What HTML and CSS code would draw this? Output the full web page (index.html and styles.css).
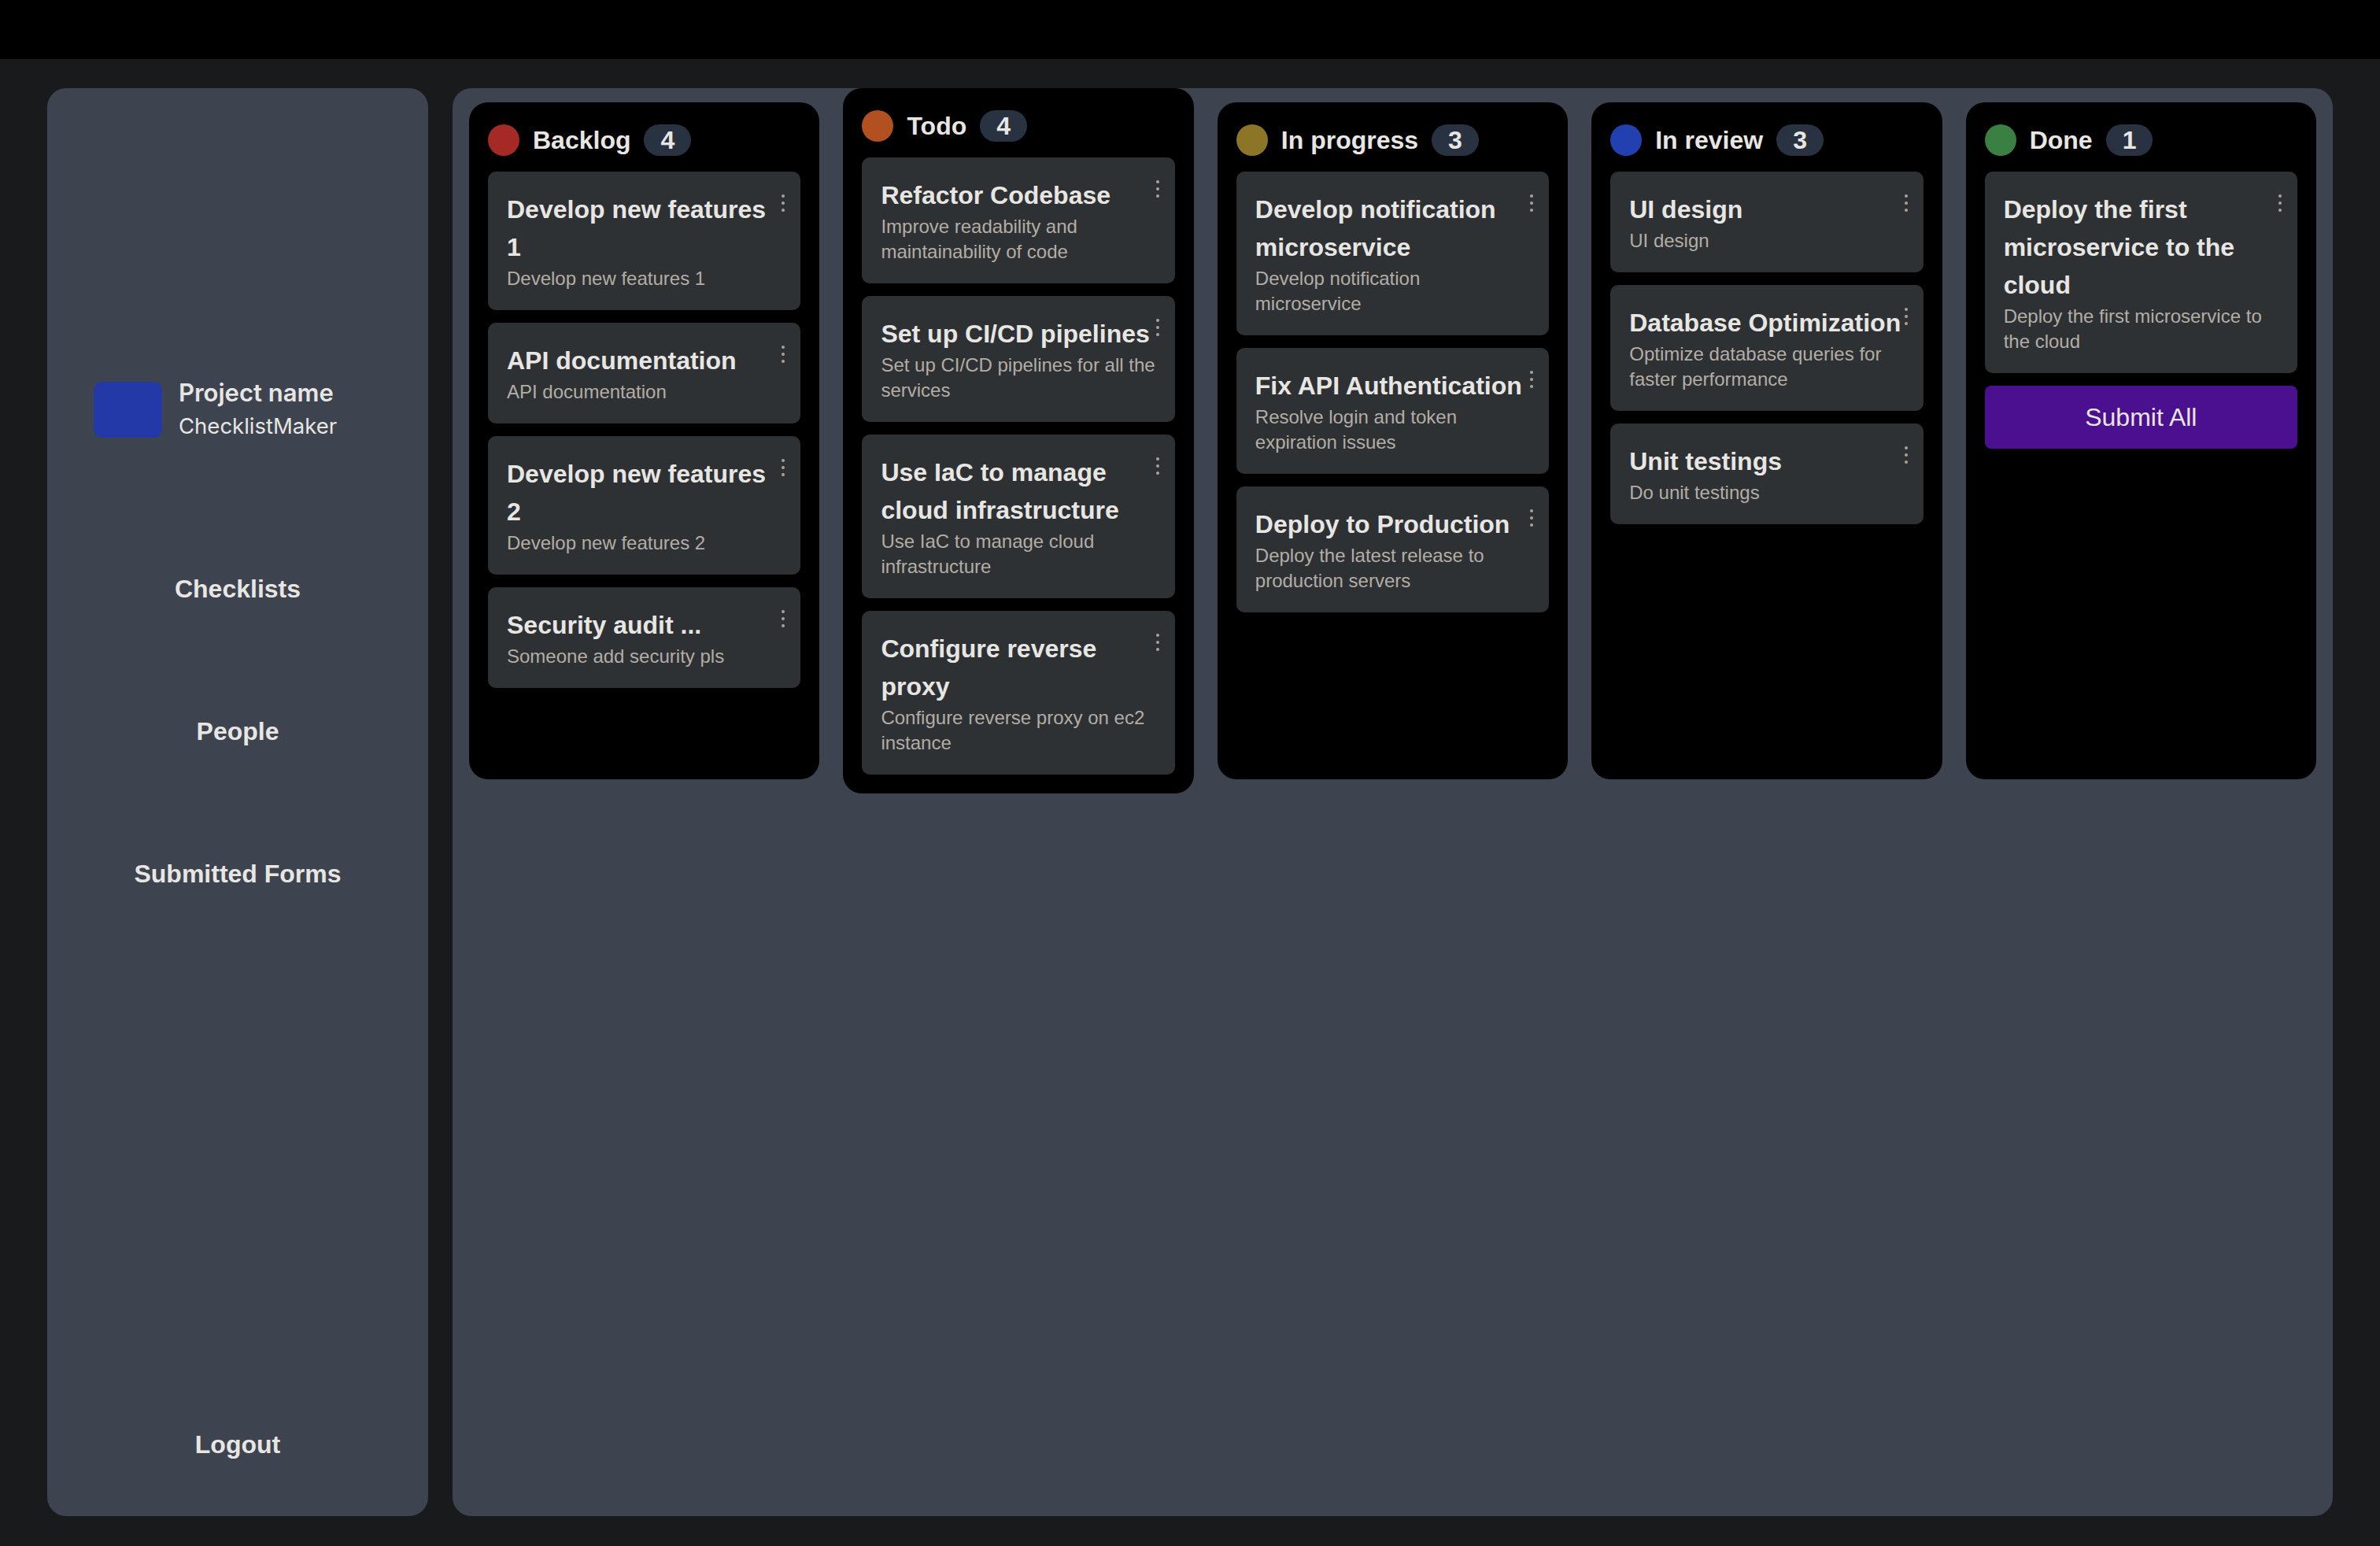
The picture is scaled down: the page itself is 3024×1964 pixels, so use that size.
FILE: index.html
```html
<!DOCTYPE html>
<html lang="en">
  <head>
    <meta charset="UTF-8" />
    <meta name="viewport" content="width=device-width, initial-scale=1.0" />
    <title>ChecklistMaker</title>
    <link rel="stylesheet" href="styles.css">
  </head>
  <body>
    <div class="topbar"></div>

    <div class="layout">
      <aside class="sidebar">
        <div class="project">
          <div class="project-logo"></div>
          <div class="project-text">
            <div class="project-label">Project name</div>
            <div class="project-name">ChecklistMaker</div>
          </div>
        </div>
        <nav class="nav">
          <a class="nav-link" href="#">Checklists</a>
          <a class="nav-link" href="#">People</a>
          <a class="nav-link" href="#">Submitted Forms</a>
        </nav>
        <a class="nav-link logout" href="#">Logout</a>
      </aside>

      <main class="panel">
        <div class="board">
          <section class="column">
            <div class="column-header">
              <span class="dot dot-red"></span>
              <h2>Backlog</h2>
              <span class="count">4</span>
            </div>
            <div class="card">
              <h3>Develop new features 1</h3>
              <p>Develop new features 1</p>
              <svg class="kebab" width="4" height="22" viewBox="0 0 4 22"><circle cx="2" cy="2" r="2"/><circle cx="2" cy="11" r="2"/><circle cx="2" cy="20" r="2"/></svg>
            </div>
            <div class="card">
              <h3>API documentation</h3>
              <p>API documentation</p>
              <svg class="kebab" width="4" height="22" viewBox="0 0 4 22"><circle cx="2" cy="2" r="2"/><circle cx="2" cy="11" r="2"/><circle cx="2" cy="20" r="2"/></svg>
            </div>
            <div class="card">
              <h3>Develop new features 2</h3>
              <p>Develop new features 2</p>
              <svg class="kebab" width="4" height="22" viewBox="0 0 4 22"><circle cx="2" cy="2" r="2"/><circle cx="2" cy="11" r="2"/><circle cx="2" cy="20" r="2"/></svg>
            </div>
            <div class="card">
              <h3>Security audit ...</h3>
              <p>Someone add security pls</p>
              <svg class="kebab" width="4" height="22" viewBox="0 0 4 22"><circle cx="2" cy="2" r="2"/><circle cx="2" cy="11" r="2"/><circle cx="2" cy="20" r="2"/></svg>
            </div>
          </section>

          <section class="column">
            <div class="column-header">
              <span class="dot dot-orange"></span>
              <h2>Todo</h2>
              <span class="count">4</span>
            </div>
            <div class="card">
              <h3>Refactor Codebase</h3>
              <p>Improve readability and maintainability of code</p>
              <svg class="kebab" width="4" height="22" viewBox="0 0 4 22"><circle cx="2" cy="2" r="2"/><circle cx="2" cy="11" r="2"/><circle cx="2" cy="20" r="2"/></svg>
            </div>
            <div class="card">
              <h3>Set up CI/CD pipelines</h3>
              <p>Set up CI/CD pipelines for all the services</p>
              <svg class="kebab" width="4" height="22" viewBox="0 0 4 22"><circle cx="2" cy="2" r="2"/><circle cx="2" cy="11" r="2"/><circle cx="2" cy="20" r="2"/></svg>
            </div>
            <div class="card">
              <h3>Use IaC to manage cloud infrastructure</h3>
              <p>Use IaC to manage cloud infrastructure</p>
              <svg class="kebab" width="4" height="22" viewBox="0 0 4 22"><circle cx="2" cy="2" r="2"/><circle cx="2" cy="11" r="2"/><circle cx="2" cy="20" r="2"/></svg>
            </div>
            <div class="card">
              <h3>Configure reverse proxy</h3>
              <p>Configure reverse proxy on ec2 instance</p>
              <svg class="kebab" width="4" height="22" viewBox="0 0 4 22"><circle cx="2" cy="2" r="2"/><circle cx="2" cy="11" r="2"/><circle cx="2" cy="20" r="2"/></svg>
            </div>
          </section>

          <section class="column">
            <div class="column-header">
              <span class="dot dot-gold"></span>
              <h2>In progress</h2>
              <span class="count">3</span>
            </div>
            <div class="card">
              <h3>Develop notification microservice</h3>
              <p>Develop notification microservice</p>
              <svg class="kebab" width="4" height="22" viewBox="0 0 4 22"><circle cx="2" cy="2" r="2"/><circle cx="2" cy="11" r="2"/><circle cx="2" cy="20" r="2"/></svg>
            </div>
            <div class="card">
              <h3>Fix API Authentication</h3>
              <p>Resolve login and token expiration issues</p>
              <svg class="kebab" width="4" height="22" viewBox="0 0 4 22"><circle cx="2" cy="2" r="2"/><circle cx="2" cy="11" r="2"/><circle cx="2" cy="20" r="2"/></svg>
            </div>
            <div class="card">
              <h3>Deploy to Production</h3>
              <p>Deploy the latest release to production servers</p>
              <svg class="kebab" width="4" height="22" viewBox="0 0 4 22"><circle cx="2" cy="2" r="2"/><circle cx="2" cy="11" r="2"/><circle cx="2" cy="20" r="2"/></svg>
            </div>
          </section>

          <section class="column">
            <div class="column-header">
              <span class="dot dot-blue"></span>
              <h2>In review</h2>
              <span class="count">3</span>
            </div>
            <div class="card">
              <h3>UI design</h3>
              <p>UI design</p>
              <svg class="kebab" width="4" height="22" viewBox="0 0 4 22"><circle cx="2" cy="2" r="2"/><circle cx="2" cy="11" r="2"/><circle cx="2" cy="20" r="2"/></svg>
            </div>
            <div class="card">
              <h3>Database Optimization</h3>
              <p>Optimize database queries for faster performance</p>
              <svg class="kebab" width="4" height="22" viewBox="0 0 4 22"><circle cx="2" cy="2" r="2"/><circle cx="2" cy="11" r="2"/><circle cx="2" cy="20" r="2"/></svg>
            </div>
            <div class="card">
              <h3>Unit testings</h3>
              <p>Do unit testings</p>
              <svg class="kebab" width="4" height="22" viewBox="0 0 4 22"><circle cx="2" cy="2" r="2"/><circle cx="2" cy="11" r="2"/><circle cx="2" cy="20" r="2"/></svg>
            </div>
          </section>

          <section class="column">
            <div class="column-header">
              <span class="dot dot-green"></span>
              <h2>Done</h2>
              <span class="count">1</span>
            </div>
            <div class="card">
              <h3>Deploy the first microservice to the cloud</h3>
              <p>Deploy the first microservice to the cloud</p>
              <svg class="kebab" width="4" height="22" viewBox="0 0 4 22"><circle cx="2" cy="2" r="2"/><circle cx="2" cy="11" r="2"/><circle cx="2" cy="20" r="2"/></svg>
            </div>
            <button class="submit-button">Submit All</button>
          </section>
        </div>
      </main>
    </div>
  </body>
</html>
```

FILE: styles.css
```css
* {
  box-sizing: border-box;
}

body {
  margin: 0;
  height: 100vh;
  display: flex;
  flex-direction: column;
  font-family: "Liberation Sans", Arial, sans-serif;
  background-color: #181a1b;
  color: #e8e6e3;
}

.topbar {
  height: 75px;
  background-color: #000;
}

.layout {
  flex: 1;
  display: flex;
  gap: 31px;
  padding: 37px 60px 38px;
  min-height: 0;
}

/* sidebar */

.sidebar {
  width: 484px;
  display: flex;
  flex-direction: column;
  padding-top: 366px;
  background-color: #3d444f;
  border-radius: 24px;
}

.project {
  display: flex;
  align-items: center;
  gap: 21px;
  padding-left: 59px;
}

.project-logo {
  width: 87px;
  height: 71px;
  background-color: #2339a8;
  border-radius: 11px;
}

.project-text {
  font-family: Inter, "Noto Sans", sans-serif;
  line-height: 42px;
}

.project-label {
  font-size: 31px;
  font-weight: 600;
}

.project-name {
  font-size: 27.5px;
  font-weight: 400;
}

.nav {
  display: flex;
  flex-direction: column;
  margin-top: 96px;
}

.nav-link {
  display: block;
  padding: 72px 0;
  line-height: 37px;
  font-size: 32px;
  font-weight: bold;
  text-align: center;
  color: #e8e6e3;
  text-decoration: none;
}

.logout {
  margin-top: auto;
}

/* board */

.panel {
  flex: 1;
  background-color: #3d444f;
  border-radius: 24px;
}

.board {
  display: flex;
  align-items: center;
  gap: 30px;
  padding: 0 21px;
}

.column {
  flex: 1;
  min-width: 0;
  min-height: 860px;
  display: flex;
  flex-direction: column;
  gap: 16px;
  padding: 24px;
  background-color: #000;
  border-radius: 24px;
}

.column-header {
  height: 48px;
  display: flex;
  align-items: center;
  gap: 17px;
}

.column-header h2 {
  margin: 0;
  font-size: 32px;
  font-weight: bold;
}

.dot {
  width: 40px;
  height: 40px;
  border-radius: 50%;
}

.dot-red {
  background-color: #a52a26;
}

.dot-orange {
  background-color: #b25022;
}

.dot-gold {
  background-color: #8c7526;
}

.dot-blue {
  background-color: #2240b0;
}

.dot-green {
  background-color: #3a8043;
}

.count {
  height: 40px;
  padding: 0 21px;
  line-height: 40px;
  font-size: 32px;
  font-weight: bold;
  background-color: #283241;
  border-radius: 20px;
}

.card {
  position: relative;
  padding: 24px;
  background-color: #2e3134;
  border-radius: 10px;
}

.card h3 {
  margin: 0;
  font-size: 32px;
  line-height: 48px;
  font-weight: bold;
}

.card p {
  margin: 0;
  font-size: 24px;
  line-height: 32px;
  color: #b3ada5;
}

.kebab {
  position: absolute;
  top: 29px;
  right: 20px;
  fill: #a8a29a;
}

.submit-button {
  height: 80px;
  border: none;
  border-radius: 8px;
  font-family: "Liberation Sans", Arial, sans-serif;
  font-size: 32px;
  color: #e8e6e3;
  background-color: #4b108f;
  cursor: pointer;
}
```
